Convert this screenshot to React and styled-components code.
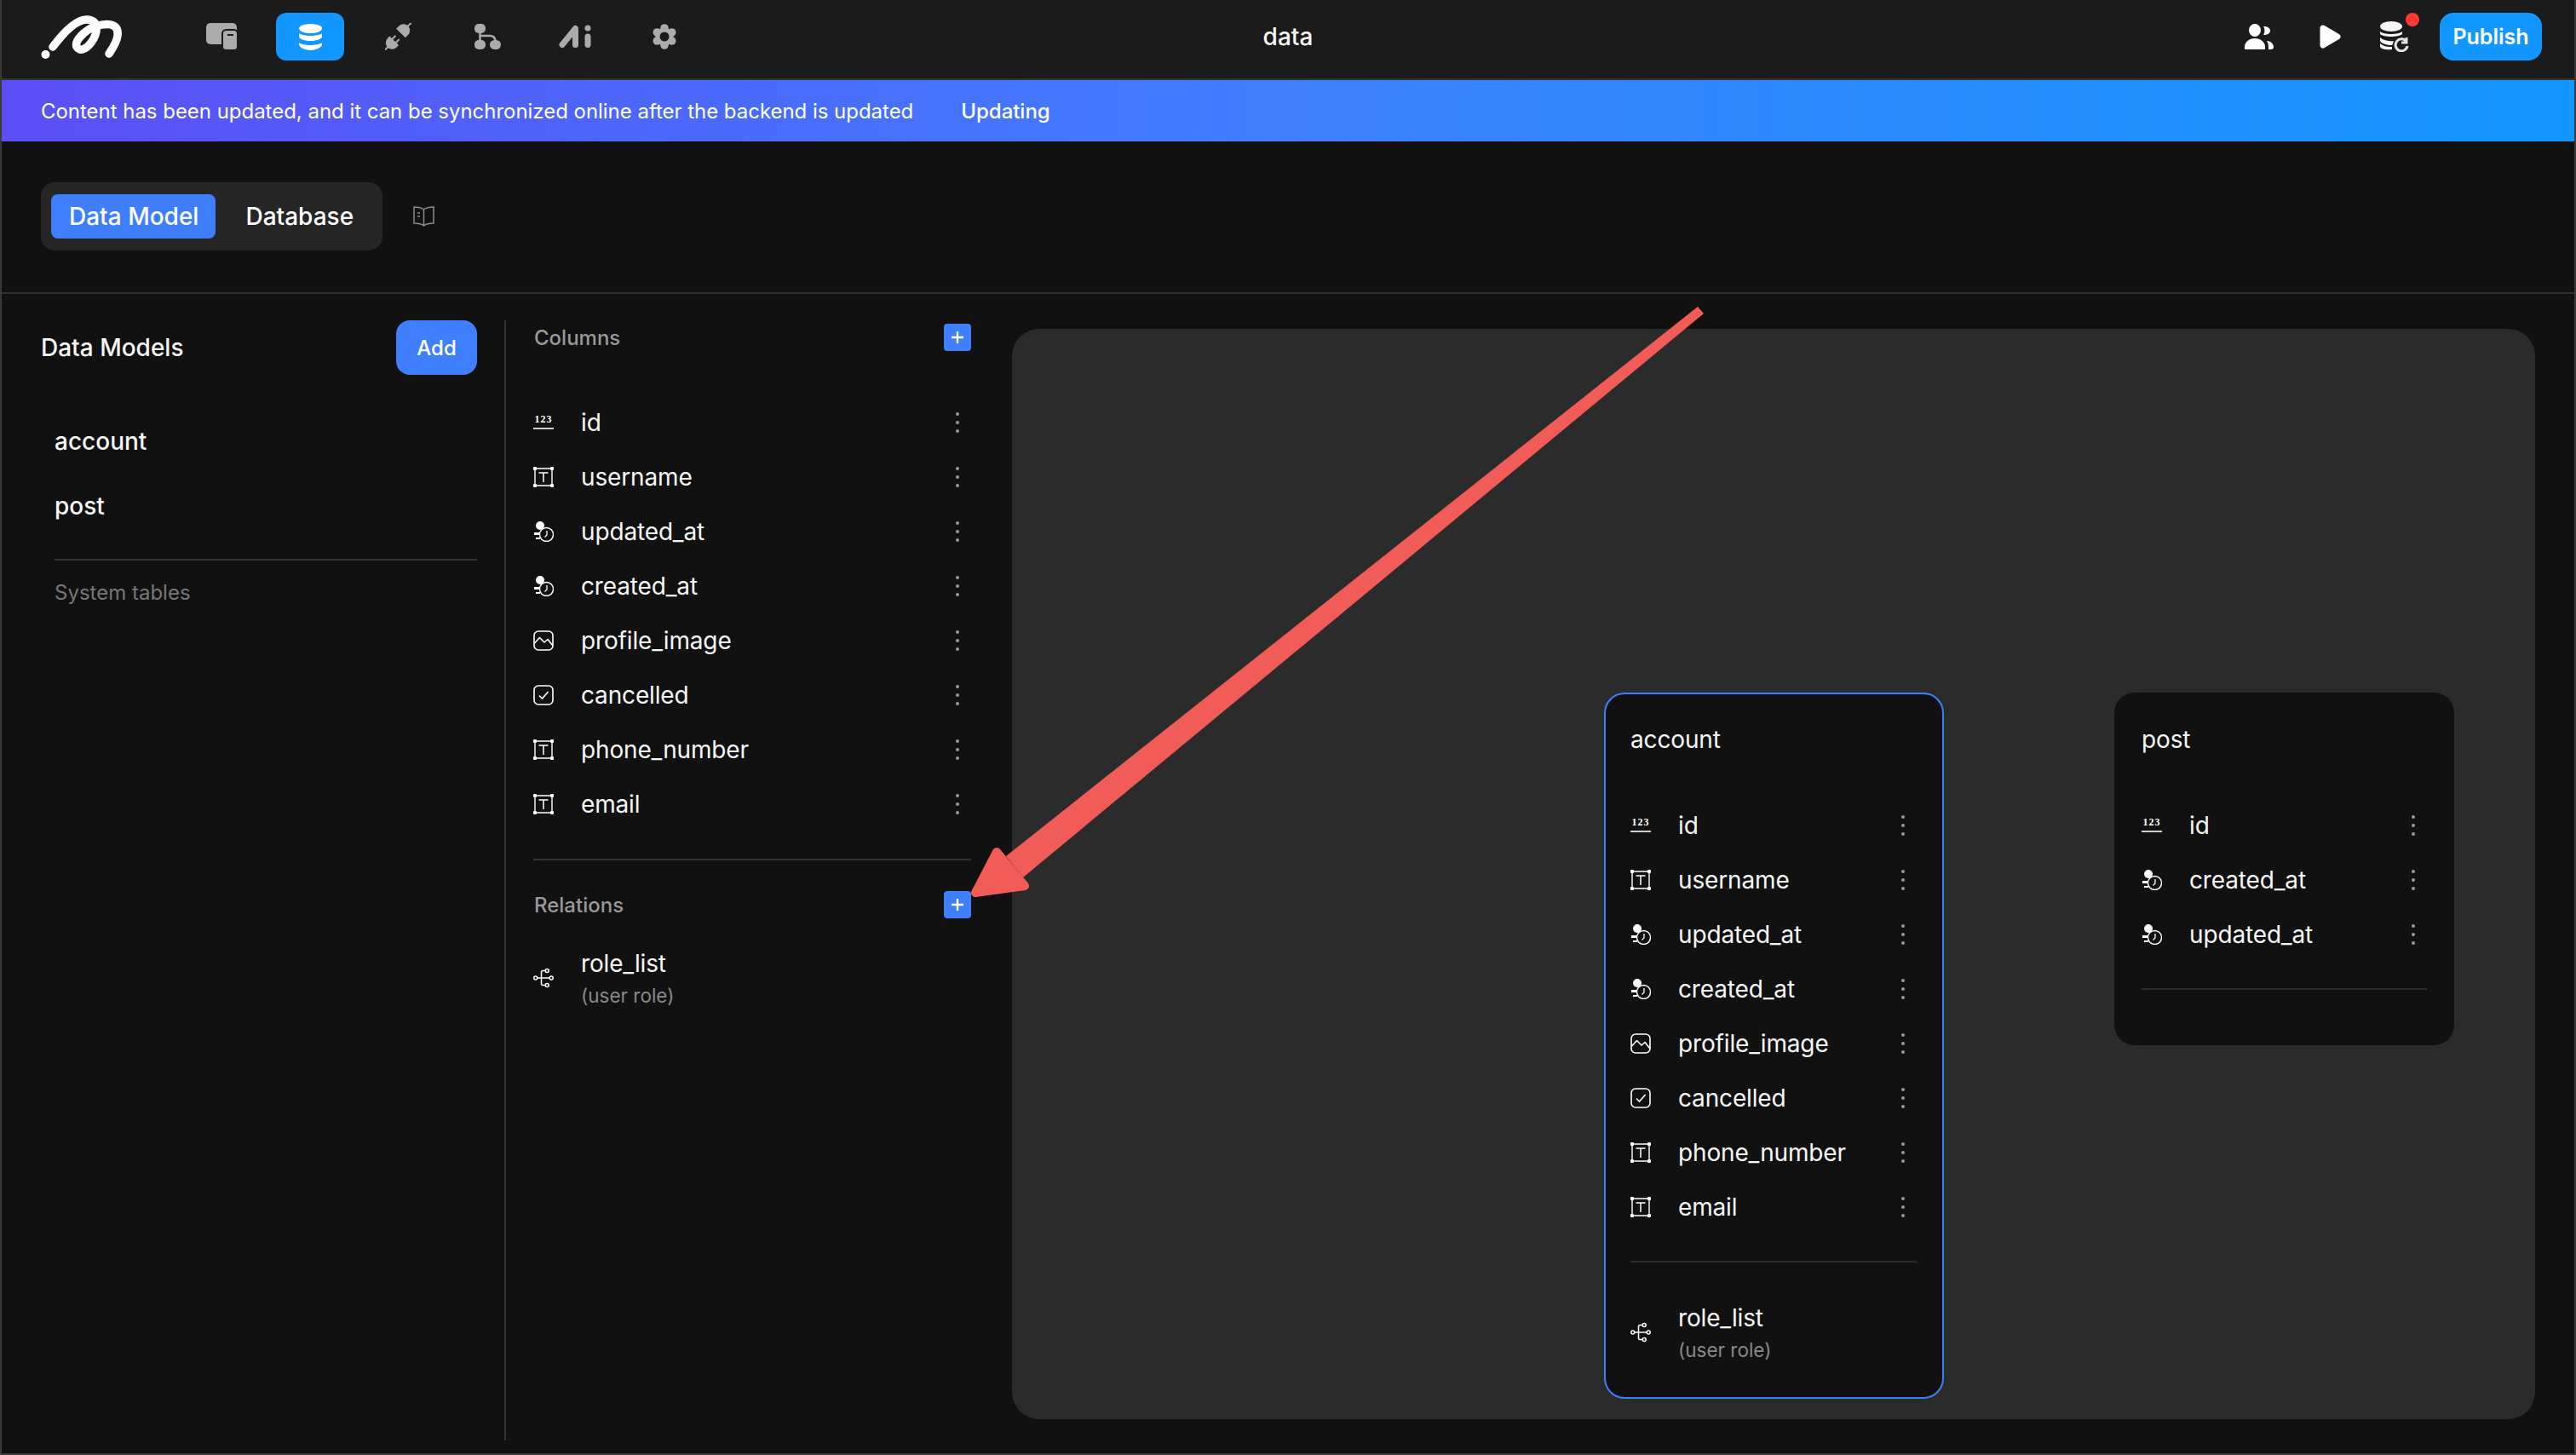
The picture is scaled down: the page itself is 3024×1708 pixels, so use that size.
import React from 'react';
import styled, {createGlobalStyle} from 'styled-components';

const GlobalStyle = createGlobalStyle`
  html, body {
    margin: 0;
    background: #111111;
  }
  * {
    box-sizing: border-box;
  }
`;

const Page = styled.div`
  position: relative;
  width: 3024px;
  height: 1708px;
  display: flex;
  flex-direction: column;
  overflow: hidden;
  background: #111111;
  color: #f7f7f7;
  font-family: Inter, "Liberation Sans", sans-serif;
  border-left: 2px solid #3a3a3a;
  border-right: 2px solid #3a3a3a;
  border-bottom: 2px solid #3a3a3a;
`;

const TopBar = styled.header`
  flex: none;
  height: 94px;
  display: grid;
  grid-template-columns: 1fr auto 1fr;
  align-items: center;
  padding: 0 38px 6px 38px;
  background: #1b1b1b;
  border-bottom: 2px solid #333333;
`;

const TopLeft = styled.div`
  display: flex;
  align-items: center;
`;

const Logo = styled.svg`
  width: 96px;
  height: 56px;
  margin: 0 76px 0 8px;
`;

const Nav = styled.nav`
  display: flex;
  gap: 24px;
`;

const NavTab = styled.div`
  width: 80px;
  height: 56px;
  display: flex;
  align-items: center;
  justify-content: center;
  border-radius: 12px;
  background: ${props => (props.$active ? '#1296ff' : 'transparent')};
`;

const Title = styled.div`
  font-size: 28px;
  font-weight: 500;
`;

const TopRight = styled.div`
  display: flex;
  align-items: center;
  justify-content: flex-end;
  gap: 24px;
`;

const ActionIcon = styled.div`
  position: relative;
  width: 56px;
  height: 56px;
  display: flex;
  align-items: center;
  justify-content: center;
`;

const RedDot = styled.span`
  position: absolute;
  left: 40px;
  top: 0;
  width: 16px;
  height: 16px;
  border-radius: 50%;
  background: #ff3b30;
`;

const PublishButton = styled.button`
  width: 120px;
  height: 56px;
  border: 0;
  border-radius: 16px;
  background: #1296ff;
  color: #ffffff;
  font-family: inherit;
  font-size: 25px;
  font-weight: 600;
`;

const Banner = styled.div`
  flex: none;
  height: 72px;
  display: flex;
  align-items: center;
  gap: 56px;
  padding-left: 46px;
  background: linear-gradient(90deg, #5b4ff5 0%, #3f7ffe 50%, #1296ff 100%);
  color: #ffffff;
  font-size: 24px;
  letter-spacing: -0.03px;
`;

const BannerAction = styled.span`
  font-weight: 500;
`;

const Toolbar = styled.div`
  flex: none;
  height: 179px;
  display: flex;
  align-items: center;
  gap: 36px;
  padding: 0 0 2px 46px;
  border-bottom: 2px solid #333333;
`;

const Segmented = styled.div`
  width: 401px;
  height: 80px;
  display: flex;
  align-items: center;
  padding: 0 12px;
  border-radius: 16px;
  background: #262626;
`;

const Segment = styled.div`
  height: 52px;
  padding: ${props => (props.$active ? '0 20px 0 21px' : '0 35px')};
  display: flex;
  align-items: center;
  border-radius: 8px;
  background: ${props => (props.$active ? '#3f7ffe' : 'transparent')};
  color: #ffffff;
  font-size: 28px;
  font-weight: 500;
  white-space: nowrap;
`;

const Main = styled.main`
  flex: 1;
  min-height: 0;
  display: flex;
  padding-top: 31px;
  padding-bottom: 15px;
`;

const ModelsPanel = styled.aside`
  flex: none;
  width: 592px;
  padding: 0 32px 0 46px;
  border-right: 2px solid #333333;
`;

const ModelsHeader = styled.div`
  height: 64px;
  display: flex;
  align-items: center;
  justify-content: space-between;
`;

const PanelTitle = styled.h2`
  margin: 0;
  font-size: 28px;
  font-weight: 550;
`;

const AddButton = styled.button`
  width: 95px;
  height: 64px;
  border: 0;
  border-radius: 16px;
  background: #3f7ffe;
  color: #ffffff;
  font-family: inherit;
  font-size: 24px;
  font-weight: 500;
`;

const ModelList = styled.div`
  margin-top: 40px;
  padding-left: 16px;
`;

const ModelItem = styled.div`
  height: 76px;
  display: flex;
  align-items: center;
  font-size: 28px;
  font-weight: 550;
`;

const ModelsFooter = styled.div`
  margin: 24px 0 0 16px;
  padding-top: 22px;
  border-top: 2px solid #333333;
  color: #777777;
  font-size: 24px;
  line-height: 32px;
`;

const ColumnsPanel = styled.section`
  flex: none;
  width: 594px;
  padding: 4px 48px 0 32px;
`;

const SectionHeader = styled.div`
  height: 32px;
  display: flex;
  align-items: center;
  justify-content: space-between;
  margin-top: ${props => props.$gap || 0}px;
`;

const SectionTitle = styled.h3`
  margin: 0 0 0 1px;
  color: #999999;
  font-size: 24px;
  font-weight: 550;
`;

const PlusButton = styled.div`
  width: 32px;
  height: 32px;
  display: flex;
  align-items: center;
  justify-content: center;
  border-radius: 4px;
  background: #3f7ffe;
`;

const FieldList = styled.div`
  margin-top: ${props => props.$gap}px;
`;

const Row = styled.div`
  height: 64px;
  display: flex;
  align-items: center;
`;

const IconSlot = styled.div`
  flex: none;
  width: 24px;
  height: 24px;
  margin-right: 32px;
  display: flex;
  align-items: center;
  justify-content: center;
`;

const FieldName = styled.div`
  flex: 1;
  font-size: 28px;
  line-height: 40px;
  letter-spacing: -0.15px;
  white-space: nowrap;
`;

const DotsButton = styled.div`
  flex: none;
  width: 32px;
  display: flex;
  flex-direction: column;
  align-items: center;
  gap: 6px;
`;

const Dot = styled.i`
  width: 4px;
  height: 4px;
  border-radius: 50%;
  background: #999999;
`;

const Rule = styled.hr`
  margin: ${props => props.$gap}px 0 0;
  border: 0;
  height: 2px;
  background: ${props => props.$soft ? '#2b2b2b' : '#333333'};
`;

const RelationRow = styled.div`
  display: flex;
  align-items: center;
  margin-top: ${props => props.$gap}px;
`;

const RelationSub = styled.div`
  margin-top: 2px;
  color: #888888;
  font-size: 22.5px;
  line-height: 32px;
`;

const Canvas = styled.div`
  position: relative;
  flex: none;
  width: 1788px;
  height: 1280px;
  margin-top: 10px;
  border-radius: 32px;
  background: #2b2b2b;
`;

const Card = styled.div`
  position: absolute;
  left: ${props => props.$x}px;
  top: ${props => props.$y}px;
  width: 399px;
  height: ${props => props.$height}px;
  padding: 33px 30px 0 ${props => (props.$selected ? 29 : 30)}px;
  border: 2px solid ${props => (props.$selected ? '#3f7ffe' : 'transparent')};
  border-radius: 24px;
  background: #111111;
`;

const CardTitle = styled.div`
  font-size: 28px;
  line-height: 40px;
  letter-spacing: -0.15px;
`;

const Arrow = styled.svg`
  position: absolute;
  left: -2px;
  top: 0;
  width: 3024px;
  height: 1708px;
  pointer-events: none;
`;

const grey = '#ababab';

const DevicesIcon = () => (
  <svg width="36" height="32" viewBox="0 0 36 32">
    <rect width="36" height="25" rx="5" fill={grey}/>
    <rect x="19" y="8" width="18" height="24" rx="4.5" fill={grey} stroke="#1b1b1b" strokeWidth="2"/>
    <rect x="25" y="13" width="7" height="2" fill="#1b1b1b"/>
  </svg>
);

const DatabaseIcon = () => (
  <svg width="29" height="31" viewBox="0 0 29 31" fill="#fff">
    <ellipse cx="14.5" cy="5.5" rx="13.5" ry="5.5"/>
    <path d="M1 11C5 15 24 15 28 11V15C28 18 20 20 14.5 20C9 20 1 18 1 15Z"/>
    <path d="M1 22C5 26 24 26 28 22V24C28 28 20 31 14.5 31C9 31 1 28 1 24Z"/>
  </svg>
);

const PlugIcon = () => (
  <svg width="32" height="32" viewBox="0 0 32 32" fill={grey} stroke={grey}>
    <g transform="translate(21 9.5) rotate(45)">
      <path d="M-7 3V-1A7 7 0 0 1 7 -1V3Z"/>
      <path d="M0 -7V-13" strokeWidth="2" strokeLinecap="round"/>
    </g>
    <g transform="translate(9 22.5) rotate(45)">
      <path d="M-7 -2V1A7 7 0 0 0 7 1V-2Z"/>
      <path d="M0 7V12M-3 -2V-7M3 -2V-7" strokeWidth="2" strokeLinecap="round"/>
    </g>
  </svg>
);

const SitemapIcon = () => (
  <svg width="31" height="30" viewBox="0 0 31 30" fill={grey}>
    <rect width="13" height="11" rx="5"/>
    <rect y="19" width="13" height="11" rx="5"/>
    <rect x="18" y="19" width="13" height="11" rx="5.5"/>
    <path d="M6.5 10V20M6.5 14H18Q24 14 24.5 20" fill="none" stroke={grey} strokeWidth="2.5"/>
  </svg>
);

const AiIcon = () => (
  <svg width="40" height="28" viewBox="0 0 40 28" fill="none" stroke={grey} strokeWidth="7" strokeLinecap="round" strokeLinejoin="round">
    <path d="M4 23.5L19.5 4.5V23.5"/>
    <path d="M34 14V23.5"/>
    <circle cx="34" cy="4" r="3.5" fill={grey} stroke="none"/>
  </svg>
);

const GearIcon = () => (
  <svg width="30" height="30" viewBox="0 0 30 30" fill={grey}>
    <circle cx="15" cy="15" r="10.5"/>
    {[[15, 5], [23.7, 10], [23.7, 20], [15, 25], [6.3, 20], [6.3, 10]].map(([x, y]) => (
      <circle key={`${x}-${y}`} cx={x} cy={y} r="4.8"/>
    ))}
    <circle cx="15" cy="15" r="5.5" fill="#1b1b1b"/>
  </svg>
);

const UsersIcon = () => (
  <svg width="34" height="30" viewBox="0 0 34 30" fill="#fff">
    <ellipse cx="12" cy="7.5" rx="7" ry="7.5"/>
    <path d="M0 30V27C0 21 6 17 12 17C18 17 24 21 24 27V30Z"/>
    <path d="M22 3C27 3 30 5 30 8C30 11 27 13 22 13C24 10 24 6 22 3Z"/>
    <path d="M26 20C31 20 34 24 34 27C34 29 33 30 31 30H28C28 26 28 23 26 20Z"/>
  </svg>
);

const PlayIcon = () => (
  <svg width="25" height="28" viewBox="0 0 25 28" style={{marginLeft: 6}}>
    <path d="M4 4L21 14L4 24Z" fill="#fff" stroke="#fff" strokeWidth="7" strokeLinejoin="round"/>
  </svg>
);

const DbSyncIcon = () => (
  <svg width="36" height="36" viewBox="0 0 36 36" fill="#f5f5f5">
    <ellipse cx="13" cy="6" rx="13" ry="6"/>
    <path d="M0 12C4 16 22 16 26 12V15C22 19 4 19 0 15Z"/>
    <path d="M0 19C4 23 14 24 17 23L14 28C8 28 0 26 0 22Z"/>
    <path d="M0 26C4 30 10 30 14 30V33C8 34 0 33 0 29Z"/>
    <circle cx="25" cy="27" r="10" fill="#1b1b1b"/>
    <path d="M31 24A7 7 0 1 0 32 29M31 19V25H25" fill="none" stroke="#e4e4e4" strokeWidth="3"/>
  </svg>
);

const BookIcon = () => (
  <svg width="25" height="24" viewBox="0 0 25 24" fill="none" stroke="#8c8c8c" strokeWidth="1.5">
    <path d="M12.5 4C10 2 5 1 1 1V20C5 20 10 21 12.5 23C15 21 20 20 24 20V1C20 1 15 2 12.5 4V23"/>
    <path d="M5 8H8M5 12H8"/>
  </svg>
);

const PlusIcon = () => (
  <svg width="14" height="14" viewBox="0 0 14 14" stroke="#fff" strokeWidth="2.4">
    <path d="M7 0V14M0 7H14"/>
  </svg>
);

const NumberIcon = () => (
  <svg width="24" height="24" viewBox="0 0 24 24">
    <text x="12" y="12" textAnchor="middle" fill="#fff" fontFamily="Liberation Serif" fontWeight="700" fontSize="12" letterSpacing="1">123</text>
    <path d="M0 19H24" stroke="#fff" strokeWidth="1.6"/>
  </svg>
);

const TextIcon = () => (
  <svg width="24" height="24" viewBox="0 0 24 24" fill="#fff">
    <path d="M2 2H22V22H2Z" fill="none" stroke="#fff" strokeWidth="1.4"/>
    <path d="M6.5 7H17.5M12 7V18" fill="none" stroke="#fff" strokeWidth="1.5"/>
    <rect width="4" height="4" rx="1"/>
    <rect x="20" width="4" height="4" rx="1"/>
    <rect y="20" width="4" height="4" rx="1"/>
    <rect x="20" y="20" width="4" height="4" rx="1"/>
  </svg>
);

const TimeIcon = () => (
  <svg width="24" height="24" viewBox="0 0 24 24" fill="#fff">
    <circle cx="8" cy="5" r="5"/>
    <path d="M1 13H11V16H1ZM3 19H8V21H3Z"/>
    <circle cx="15.5" cy="15.5" r="8" fill="#111" stroke="#fff" strokeWidth="1.4"/>
    <path d="M16 11V16L13.5 18.5" fill="none" stroke="#fff" strokeWidth="1.3"/>
  </svg>
);

const ImageIcon = () => (
  <svg width="24" height="24" viewBox="0 0 24 24" fill="none" stroke="#fff" strokeWidth="1.6" strokeLinejoin="round">
    <rect x="1" y="1" width="22" height="22" rx="5"/>
    <path d="M1.5 15L7.5 8.5L13 14L17 10.5L23 18"/>
  </svg>
);

const CheckIcon = () => (
  <svg width="24" height="24" viewBox="0 0 24 24" fill="none" stroke="#fff" strokeWidth="1.6">
    <rect x="1" y="1" width="22" height="22" rx="5"/>
    <path d="M7 12.5L10.5 16L17.5 8"/>
  </svg>
);

const RelationIcon = () => (
  <svg width="24" height="24" viewBox="0 0 24 24" fill="none" stroke="#fff" strokeWidth="1.5">
    <path d="M5 12H19M9.5 12V5C9.5 4 10 3.5 11 3.5H14M9.5 12V19C9.5 20 10 20.5 11 20.5H14"/>
    <circle cx="2.8" cy="12" r="2"/>
    <circle cx="21.2" cy="12" r="2"/>
    <circle cx="16.2" cy="3.5" r="2"/>
    <circle cx="16.2" cy="20.5" r="2"/>
  </svg>
);

const fieldIcons = {
  number: NumberIcon,
  text: TextIcon,
  time: TimeIcon,
  image: ImageIcon,
  check: CheckIcon
};

const accountFields = [
  {name: 'id', type: 'number'},
  {name: 'username', type: 'text'},
  {name: 'updated_at', type: 'time'},
  {name: 'created_at', type: 'time'},
  {name: 'profile_image', type: 'image'},
  {name: 'cancelled', type: 'check'},
  {name: 'phone_number', type: 'text'},
  {name: 'email', type: 'text'}
];

const postFields = [
  {name: 'id', type: 'number'},
  {name: 'created_at', type: 'time'},
  {name: 'updated_at', type: 'time'}
];

const navItems = [DevicesIcon, DatabaseIcon, PlugIcon, SitemapIcon, AiIcon, GearIcon];

const FieldRow = ({name, type}) => {
  const Icon = fieldIcons[type];
  return (
    <Row>
      <IconSlot><Icon/></IconSlot>
      <FieldName>{name}</FieldName>
      <DotsButton><Dot/><Dot/><Dot/></DotsButton>
    </Row>
  );
};

const Relation = ({gap}) => (
  <RelationRow $gap={gap}>
    <IconSlot><RelationIcon/></IconSlot>
    <div>
      <FieldName>role_list</FieldName>
      <RelationSub>(user role)</RelationSub>
    </div>
  </RelationRow>
);

const App = () => (
  <Page>
    <GlobalStyle/>
    <TopBar>
      <TopLeft>
        <Logo viewBox="48 14 96 56">
          <circle cx="53.5" cy="63" r="5" fill="#fff"/>
          <path
            d="M62 54C74 38 90 21 103 22C117 23 115 38 107 49C101 57 93 60 90 54C87 47 100 34 112 30C124 26 140 25 138 41C137 49 132 56 128 62"
            fill="none"
            stroke="#fff"
            strokeWidth="9.5"
            strokeLinecap="round"
          />
        </Logo>
        <Nav>
          {navItems.map((Icon, index) => (
            <NavTab key={index} $active={index === 1}><Icon/></NavTab>
          ))}
        </Nav>
      </TopLeft>
      <Title>data</Title>
      <TopRight>
        <ActionIcon><UsersIcon/></ActionIcon>
        <ActionIcon><PlayIcon/></ActionIcon>
        <ActionIcon><DbSyncIcon/><RedDot/></ActionIcon>
        <PublishButton>Publish</PublishButton>
      </TopRight>
    </TopBar>

    <Banner>
      <span>Content has been updated, and it can be synchronized online after the backend is updated</span>
      <BannerAction>Updating</BannerAction>
    </Banner>

    <Toolbar>
      <Segmented>
        <Segment $active>Data Model</Segment>
        <Segment>Database</Segment>
      </Segmented>
      <BookIcon/>
    </Toolbar>

    <Main>
      <ModelsPanel>
        <ModelsHeader>
          <PanelTitle>Data Models</PanelTitle>
          <AddButton>Add</AddButton>
        </ModelsHeader>
        <ModelList>
          <ModelItem>account</ModelItem>
          <ModelItem>post</ModelItem>
        </ModelList>
        <ModelsFooter>System tables</ModelsFooter>
      </ModelsPanel>

      <ColumnsPanel>
        <SectionHeader>
          <SectionTitle>Columns</SectionTitle>
          <PlusButton><PlusIcon/></PlusButton>
        </SectionHeader>
        <FieldList $gap={52}>
          {accountFields.map(field => <FieldRow key={field.name} {...field}/>)}
        </FieldList>
        <Rule $gap={32}/>
        <SectionHeader $gap={36}>
          <SectionTitle>Relations</SectionTitle>
          <PlusButton><PlusIcon/></PlusButton>
        </SectionHeader>
        <Relation gap={33}/>
      </ColumnsPanel>

      <Canvas>
        <Card $x={695} $y={427} $height={829} $selected>
          <CardTitle>account</CardTitle>
          <FieldList $gap={49}>
            {accountFields.map(field => <FieldRow key={field.name} {...field}/>)}
          </FieldList>
          <Rule $gap={31} $soft/>
          <Relation gap={45}/>
        </Card>
        <Card $x={1294} $y={427} $height={414}>
          <CardTitle>post</CardTitle>
          <FieldList $gap={49}>
            {postFields.map(field => <FieldRow key={field.name} {...field}/>)}
          </FieldList>
          <Rule $gap={31} $soft/>
        </Card>
      </Canvas>
    </Main>

    <Arrow viewBox="0 0 3024 1708">
      <path d="M1993 360L2000 368L1201 1030L1181 1005Z" fill="#f25c58"/>
      <path d="M1145 1048L1170 1000L1203 1040Z" fill="#f25c58" stroke="#f25c58" strokeWidth="10" strokeLinejoin="round"/>
    </Arrow>
  </Page>
);

export default App;
